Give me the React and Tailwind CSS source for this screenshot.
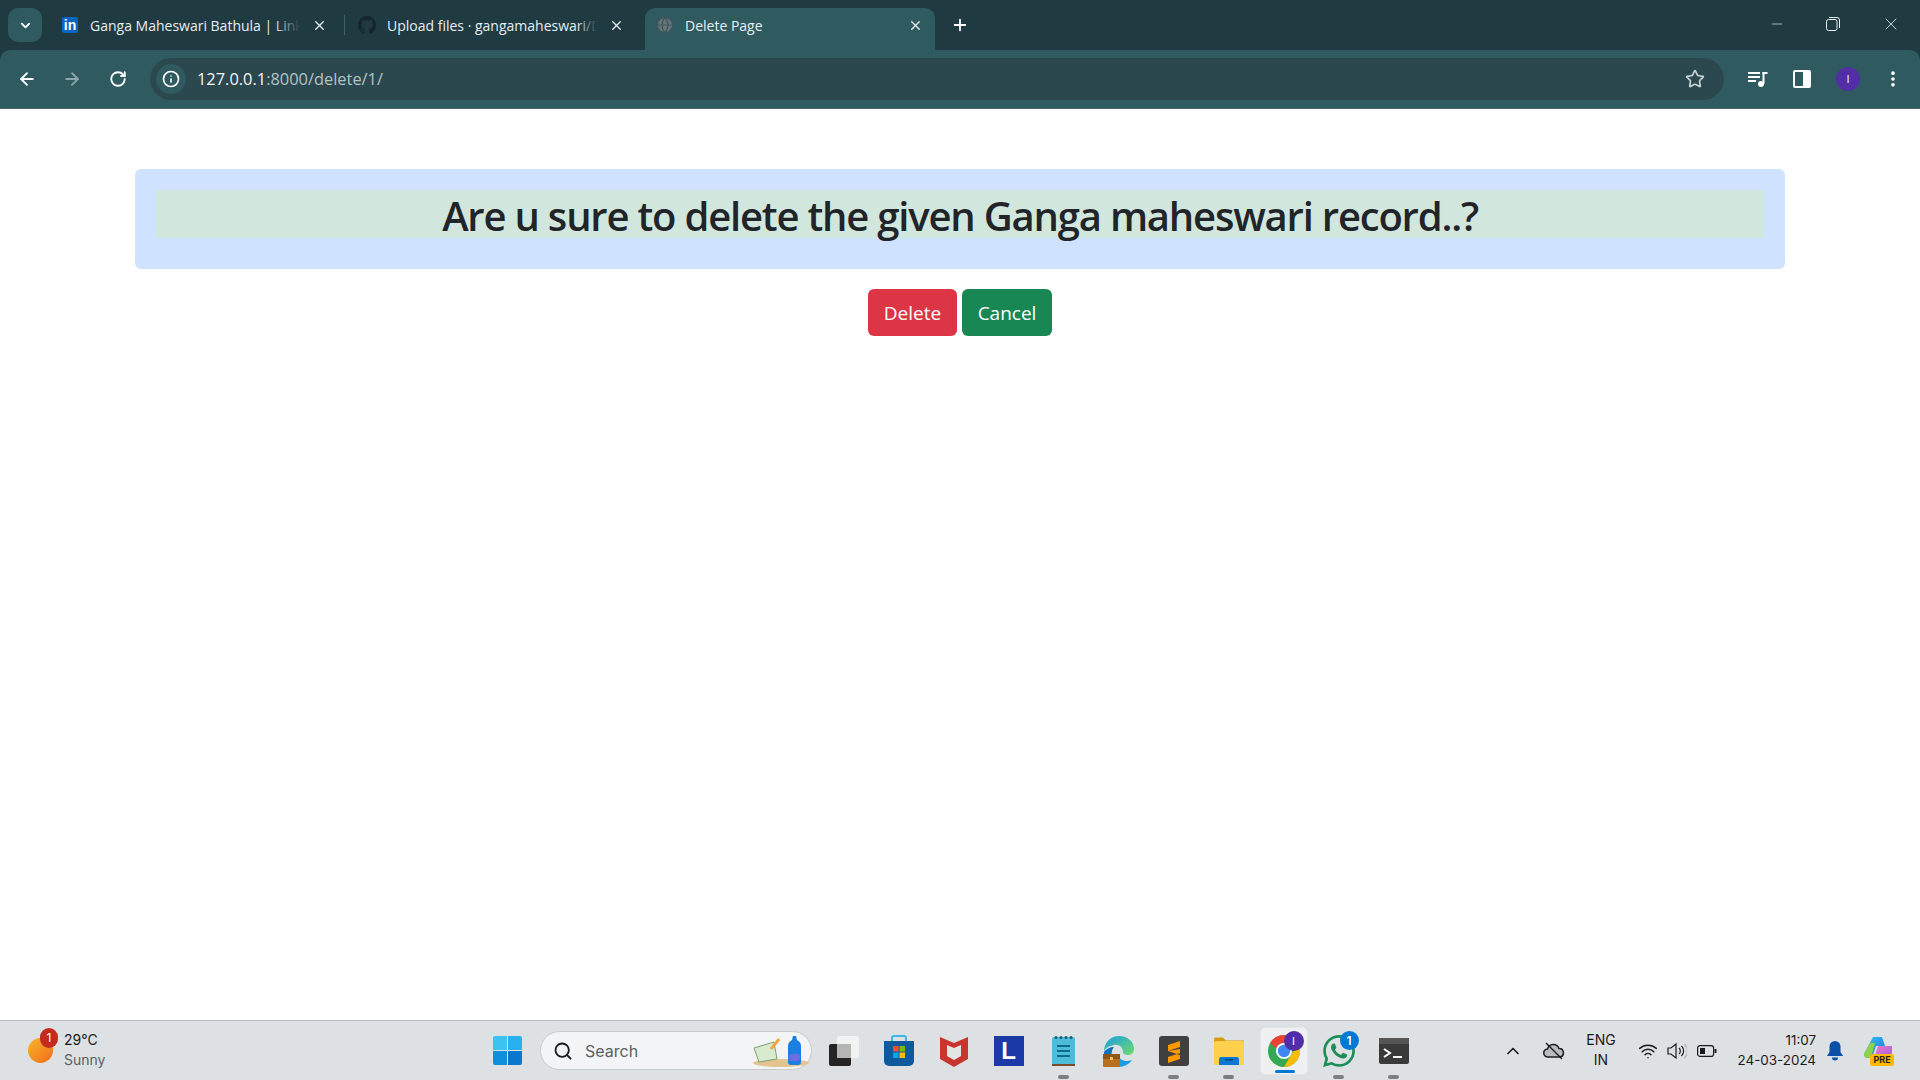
import React from 'react';
import { ArrowLeft, ArrowRight, RotateCw, Star, X, Plus, ChevronDown, ChevronUp, Info, Search, Minus, EllipsisVertical, Wifi, Globe } from 'lucide-react';

const LinkedinIcon = () => (
    <div className="w-[16px] h-[16px] bg-[#0a66c2] rounded-[2px] flex items-center justify-center text-white text-[14px] font-bold leading-none font-['Liberation_Sans',sans-serif]">in</div>
);

const GithubIcon = () => (
    <svg width="18" height="18" viewBox="0 0 16 16" fill="#15262b">
        <path d="M8 0C3.58 0 0 3.58 0 8c0 3.54 2.29 6.53 5.47 7.59.4.07.55-.17.55-.38 0-.19-.01-.82-.01-1.49-2.01.37-2.53-.49-2.69-.94-.09-.23-.48-.94-.82-1.13-.28-.15-.68-.52-.01-.53.63-.01 1.08.58 1.23.82.72 1.21 1.87.87 2.33.66.07-.52.28-.87.51-1.07-1.78-.2-3.64-.89-3.64-3.95 0-.87.31-1.59.82-2.15-.08-.2-.36-1.02.08-2.12 0 0 .67-.21 2.2.82.64-.18 1.32-.27 2-.27s1.36.09 2 .27c1.53-1.04 2.2-.82 2.2-.82.44 1.1.16 1.92.08 2.12.51.56.82 1.27.82 2.15 0 3.07-1.87 3.75-3.65 3.95.29.25.54.73.54 1.48 0 1.07-.01 1.93-.01 2.2 0 .21.15.46.55.38A8.01 8.01 0 0 0 16 8c0-4.42-3.58-8-8-8z" />
    </svg>
);

const TitleBar = () => (
    <div className="h-[50px] bg-[#1f3a41] flex items-end relative">
        <div className="w-[34px] h-[34px] ml-[8px] mb-[8px] rounded-[10px] bg-[#2f5a60] flex items-center justify-center">
            <ChevronDown size={15} strokeWidth={3} className="text-white" />
        </div>
        <div className="ml-[17px] flex items-center h-[42px] w-[285px] shrink-0 pb-[8px]">
            <div className="ml-[3px] mr-[12px]"><LinkedinIcon /></div>
            <div className="w-[210px] overflow-hidden whitespace-nowrap text-[14px] text-[#e6eef0] relative">
                Ganga Maheswari Bathula | LinkedIn
                <div className="absolute right-0 top-0 bottom-0 w-[26px] bg-gradient-to-r from-transparent to-[#1f3a41]" />
            </div>
            <X size={15} strokeWidth={2.2} className="text-[#e6eef0] ml-[12px] shrink-0" />
        </div>
        <div className="w-[1px] h-[20px] bg-[#3d6369] mb-[15px] shrink-0" />
        <div className="flex items-center h-[42px] w-[300px] shrink-0 pb-[8px] pl-[13px]">
            <GithubIcon />
            <div className="ml-[11px] w-[210px] overflow-hidden whitespace-nowrap text-[14px] text-[#e6eef0] relative">
                Upload files · gangamaheswari/Django
                <div className="absolute right-0 top-0 bottom-0 w-[20px] bg-gradient-to-r from-transparent to-[#1f3a41]" />
            </div>
            <X size={15} strokeWidth={2.2} className="text-[#e6eef0] ml-[12px] shrink-0" />
        </div>
        <div className="bg-[#2f5a60] rounded-t-[10px] flex items-center w-[290px] h-[42px] pl-[11px] pr-[12px] pb-[8px] shrink-0">
            <Globe size={18} fill="#66767b" strokeWidth={1.5} className="text-[#3f555a] shrink-0" />
            <div className="ml-[11px] flex-1 whitespace-nowrap text-[14px] text-[#e6eef0]">Delete Page</div>
            <X size={15} strokeWidth={2.2} className="text-[#e6eef0] shrink-0" />
        </div>
        <Plus size={18} strokeWidth={2.4} className="text-white ml-[16px] mb-[16px]" />
        <div className="ml-auto flex items-center self-start h-[48px] text-[#e6eef0]">
            <Minus size={16} strokeWidth={1} className="mr-[41px]" />
            <svg width="14" height="14" viewBox="0 0 14 14" fill="none" stroke="currentColor" className="mr-[41px]">
                <rect x="0.5" y="2.5" width="10.5" height="11" rx="2" />
                <path d="M3 .5h8a2.5 2.5 0 0 1 2.5 2.5v8" />
            </svg>
            <X size={20} strokeWidth={1} className="mr-[19px]" />
        </div>
    </div>
);

const MediaIcon = () => (
    <svg width="20" height="16" viewBox="0 0 20 16" fill="white">
        <rect x="0" y="1" width="12" height="2" />
        <rect x="0" y="5" width="12" height="2" />
        <rect x="0" y="9" width="8" height="2" />
        <circle cx="13" cy="13" r="3" />
        <rect x="14.5" y="1" width="2" height="12" />
        <rect x="14.5" y="1" width="5" height="2" />
    </svg>
);

const SidePanelIcon = () => (
    <svg width="18" height="18" viewBox="0 0 18 18">
        <rect x="0" y="0" width="18" height="18" rx="2" fill="white" />
        <rect x="2" y="2" width="8" height="14" fill="#2f5a60" />
    </svg>
);

const Toolbar = () => (
    <div className="bg-[#1f3a41]">
        <div className="h-[59px] bg-[#2f5a60] rounded-t-[10px] flex items-center border-b-[1px] border-[#47686d]">
            <ArrowLeft size={20} strokeWidth={2.2} className="text-white ml-[17px]" />
            <ArrowRight size={20} strokeWidth={2.2} className="text-[#8ea6a9] ml-[25px]" />
            <RotateCw size={18} strokeWidth={2.4} className="text-white ml-[27px]" />
            <div className="ml-[23px] w-[1574px] h-[42px] rounded-full bg-[#2c484f] flex items-center pl-[6px] pr-[19px]">
                <div className="w-[30px] h-[30px] rounded-full bg-[#2f5a60] flex items-center justify-center">
                    <Info size={18} strokeWidth={2.2} className="text-white" />
                </div>
                <div className="ml-[11px] text-[16.4px] text-[#f2f6f7]">
                    127.0.0.1<span className="text-[#b4c2c5]">:8000/delete/1/</span>
                </div>
                <Star size={20} strokeWidth={2} className="text-[#c7d0d2] ml-auto" />
            </div>
            <div className="ml-[24px]"><MediaIcon /></div>
            <div className="ml-[25px]"><SidePanelIcon /></div>
            <div className="ml-[25px] w-[24px] h-[24px] rounded-full bg-[#512da8] text-white text-[11px] flex items-center justify-center">I</div>
            <EllipsisVertical size={20} strokeWidth={2.4} className="text-white ml-[23px]" />
        </div>
    </div>
);

const WeatherIcon = () => (
    <div className="relative w-[30px] h-[46px]">
        <div className="absolute left-0 top-[10px] w-[25px] h-[25px] rounded-full bg-gradient-to-br from-[#f6b42c] to-[#f26a1b]" />
        <div className="absolute left-[12px] top-0 w-[18px] h-[20px] rounded-full bg-[#c42b1c] text-white text-[12px] leading-[20px] text-center">1</div>
    </div>
);

const WindowsLogo = () => (
    <div className="grid grid-cols-2 gap-[1px] w-[29px] h-[29px]">
        <div className="bg-[#3cc3f2] rounded-tl-[2px]" />
        <div className="bg-[#27b1ef] rounded-tr-[2px]" />
        <div className="bg-[#0f8fdc] rounded-bl-[2px]" />
        <div className="bg-[#0a78d1] rounded-br-[2px]" />
    </div>
);

const TaskView = () => (
    <svg width="30" height="30" viewBox="0 0 30 30">
        <rect x="0" y="8" width="22" height="22" rx="2" fill="#242424" />
        <rect x="8" y="0" width="22" height="22" rx="2" fill="#f4f4f4" fillOpacity="0.85" />
        <rect x="8" y="8" width="14" height="14" fill="#b5b5b5" />
    </svg>
);

const StoreIcon = () => (
    <svg width="30" height="32" viewBox="0 0 30 32">
        <path d="M8 6V3a2 2 0 0 1 2-2h10a2 2 0 0 1 2 2v3" fill="none" stroke="#3bb5e8" strokeWidth="2" />
        <path d="M0 6h30v20a5 5 0 0 1-5 5H5a5 5 0 0 1-5-5z" fill="#0f5a9c" />
        <rect x="9" y="11" width="5.5" height="5.5" fill="#f25022" />
        <rect x="15.5" y="11" width="5.5" height="5.5" fill="#7fba00" />
        <rect x="9" y="17.5" width="5.5" height="5.5" fill="#00a4ef" />
        <rect x="15.5" y="17.5" width="5.5" height="5.5" fill="#ffb900" />
    </svg>
);

const McafeeIcon = () => (
    <svg width="28" height="32" viewBox="0 0 28 32">
        <path d="M0 2l14 6 14-6v22l-14 8-14-8z" fill="#c8352f" />
        <path d="M7 10l7 3 7-3v11l-7 4-7-4z" fill="#e4e6e6" />
    </svg>
);

const LIcon = () => (
    <div className="w-[30px] h-[30px] bg-[#1c39a8] flex items-center justify-center text-white font-bold text-[24px] leading-none font-['Liberation_Sans',sans-serif]">L</div>
);

const NotepadIcon = () => (
    <svg width="23" height="32" viewBox="0 0 23 32">
        <rect x="0" y="2" width="23" height="28" rx="2" fill="#4dbcd8" />
        <rect x="0" y="29" width="23" height="2" fill="#7a4a2a" />
        <rect x="5" y="10" width="13" height="2" fill="#0e6a8e" />
        <rect x="5" y="15" width="13" height="2" fill="#0e6a8e" />
        <rect x="5" y="20" width="13" height="2" fill="#0e6a8e" />
        {[3, 8, 13, 18].map((x) => (
            <circle key={x} cx={x + 1} cy="2.5" r="1.5" fill="#155e7c" />
        ))}
    </svg>
);

const EdgeIcon = () => (
    <svg width="32" height="32" viewBox="0 0 32 32">
        <path d="M1 17C1 7 8 1 16 1c9 0 15 6 15 13 0 4-3 6-6 6-3 0-5-1-5-3 0-5-4-8-9-7-5 1-9 3-10 7z" fill="url(#edgeGrad)" />
        <path d="M12 31c-6-2-11-7-11-14 2-3 6-5 10-5-3 3-4 12 1 19z" fill="#0c6fc0" />
        <path d="M12 31c6 2 13 0 17-6-5 2-11 1-13-3-2 3-2 6-4 9z" fill="#1b9de2" />
        <rect x="0" y="19" width="17" height="13" rx="1" fill="#b8701e" />
        <rect x="0" y="19" width="17" height="5" fill="#8f5717" />
        <rect x="7" y="22" width="3" height="3" fill="#f2c14e" />
        <defs>
            <linearGradient id="edgeGrad" x1="0" y1="0" x2="1" y2="1">
                <stop offset="0" stopColor="#1b9de2" />
                <stop offset="1" stopColor="#6fdc6a" />
            </linearGradient>
        </defs>
    </svg>
);

const SublimeIcon = () => (
    <svg width="30" height="30" viewBox="0 0 30 30">
        <rect width="30" height="30" rx="3" fill="#404040" />
        <path d="M21 5v6L9 15v-6zM9 15l12 4v-6zM21 17v6L9 27v-6z" fill="#ff9800" />
    </svg>
);

const FolderIcon = () => (
    <svg width="30" height="30" viewBox="0 0 30 30">
        <path d="M0 3a1.5 1.5 0 0 1 1.5-1.5H9l3 3h18v3H0z" fill="#d89c10" />
        <rect x="0" y="5" width="30" height="24" rx="1.5" fill="#ffd04c" />
        <path d="M5 29v-6a2 2 0 0 1 2-2h16a2 2 0 0 1 2 2v6z" fill="#0a78d1" />
        <rect x="11" y="23" width="8" height="1.5" fill="#07457f" />
    </svg>
);

const ChromeIcon = () => (
    <div className="relative w-[48px] h-[48px] bg-[#eef0f1] rounded-[5px] flex items-center justify-center border border-[#e3e5e6]">
        <svg width="32" height="32" viewBox="0 0 32 32">
            <circle cx="16" cy="16" r="16" fill="#34a853" />
            <path d="M16 0a16 16 0 0 1 13.9 8H16a8 8 0 0 0-7.7 5.8L2.2 8A16 16 0 0 1 16 0z" fill="#ea4335" />
            <path d="M29.9 8A16 16 0 0 1 16 32l6.9-12A8 8 0 0 0 22.9 8z" fill="#fbbc04" />
            <circle cx="16" cy="16" r="8" fill="white" />
            <circle cx="16" cy="16" r="6.2" fill="#4285f4" />
        </svg>
        <div className="absolute top-[3px] right-[3px] w-[20px] h-[20px] rounded-full bg-[#512da8] text-white text-[11px] leading-[20px] text-center">I</div>
        <div className="absolute bottom-[1px] left-[14px] w-[20px] h-[3px] rounded-full bg-[#0078d4]" />
    </div>
);

const WhatsappIcon = () => (
    <div className="relative w-[32px] h-[32px]">
        <svg width="32" height="32" viewBox="0 0 24 24" fill="#1b8f57">
            <path d="M17.47 14.38c-.3-.15-1.76-.87-2.03-.97-.27-.1-.47-.15-.67.15-.2.3-.77.97-.94 1.16-.17.2-.35.22-.64.08-.3-.15-1.26-.46-2.39-1.48-.88-.79-1.48-1.76-1.65-2.06-.17-.3-.02-.46.13-.6.13-.13.3-.35.45-.52.15-.17.2-.3.3-.5.1-.2.05-.37-.03-.52-.07-.15-.67-1.61-.91-2.2-.24-.58-.49-.5-.67-.51h-.57c-.2 0-.52.07-.79.37-.27.3-1.04 1.02-1.04 2.48s1.07 2.88 1.21 3.07c.15.2 2.1 3.2 5.08 4.49.71.3 1.26.49 1.69.62.71.23 1.36.2 1.87.12.57-.08 1.76-.72 2.01-1.41.25-.7.25-1.29.17-1.41-.07-.13-.27-.2-.57-.35zM12.05 21.8h-.01a9.87 9.87 0 0 1-5.03-1.38l-.36-.21-3.74.98 1-3.65-.24-.37A9.86 9.86 0 0 1 2.17 12C2.17 6.55 6.6 2.12 12.06 2.12c2.64 0 5.12 1.03 6.99 2.9a9.82 9.82 0 0 1 2.89 6.99c0 5.45-4.44 9.89-9.89 9.89zM20.46 3.49A11.82 11.82 0 0 0 12.05 0C5.5 0 .16 5.34.16 11.89c0 2.1.55 4.14 1.59 5.95L.06 24l6.3-1.65a11.88 11.88 0 0 0 5.68 1.45h.01c6.55 0 11.89-5.34 11.89-11.89 0-3.18-1.24-6.16-3.48-8.41z" />
        </svg>
        <div className="absolute -top-[4px] -right-[4px] w-[19px] h-[19px] rounded-full bg-[#0078d4] text-white text-[12px] leading-[19px] text-center font-semibold">1</div>
    </div>
);

const TerminalIcon = () => (
    <svg width="30" height="26" viewBox="0 0 30 26">
        <rect width="30" height="26" rx="2" fill="#3a3a3a" />
        <rect width="30" height="6" fill="#555" />
        <path d="M5 11l6 4-6 4" fill="none" stroke="white" strokeWidth="2" />
        <rect x="14" y="18" width="9" height="2" fill="white" />
    </svg>
);

const CloudOff = () => (
    <svg width="22" height="18" viewBox="0 0 22 18" fill="none" stroke="#1c1c1c" strokeWidth="1.5">
        <path d="M5 15a4 4 0 0 1-.5-8A6 6 0 0 1 16 6.500a4.300 4.300 0 0 1 1 8.500z" fill="#b9bcbe" />
        <path d="M3 1l16 16" />
    </svg>
);

const Speaker = () => (
    <svg width="20" height="18" viewBox="0 0 20 18" fill="none" stroke="#1c1c1c" strokeWidth="1.2">
        <path d="M1 6h3l5-4v14l-5-4H1z" />
        <path d="M12 6a4 4 0 0 1 0 6" />
        <path d="M14.500 4a7 7 0 0 1 0 10" />
        <path d="M17.500 2a10 10 0 0 1 0 14" stroke="#b0b0b0" />
    </svg>
);

const Battery = () => (
    <svg width="20" height="12" viewBox="0 0 20 12">
        <rect x="0.6" y="0.6" width="16" height="10.800" rx="2.500" fill="none" stroke="#1c1c1c" strokeWidth="1.2" />
        <rect x="3" y="3" width="5" height="6" fill="#1c1c1c" />
        <rect x="17.500" y="4" width="2" height="4" fill="#1c1c1c" />
    </svg>
);

const Bell = () => (
    <svg width="16" height="20" viewBox="0 0 16 20" fill="#0a4fa8">
        <path d="M8 0a5.500 5.500 0 0 1 5.500 5.500V11l2.500 4H0l2.500-4V5.500A5.500 5.500 0 0 1 8 0z" />
        <path d="M5 16.500h6a3 3 0 0 1-6 0z" />
    </svg>
);

const CopilotIcon = () => (
    <div className="relative w-[30px] h-[30px]">
        <svg width="28" height="24" viewBox="0 0 28 24" className="absolute left-[0px] top-0">
            <defs>
                <linearGradient id="copA" x1="0" y1="0" x2="1" y2="1">
                    <stop offset="0" stopColor="#37c6f0" />
                    <stop offset="1" stopColor="#1d6fe0" />
                </linearGradient>
                <linearGradient id="copB" x1="0" y1="0" x2="1" y2="1">
                    <stop offset="0" stopColor="#f27ab8" />
                    <stop offset="1" stopColor="#9a5cf0" />
                </linearGradient>
            </defs>
            <path d="M9 1h9l3 9H12l-4 12H4Q0 22 0 18z" fill="url(#copA)" />
            <path d="M14 10h14v6q0 6-6 6H10z" fill="url(#copB)" />
            <path d="M0 18L6 7h5l-4 15H4Q0 22 0 18z" fill="#8fd14f" />
        </svg>
        <div className="absolute left-[6px] bottom-0 w-[24px] h-[12px] rounded-[2px] bg-[#ffb900] text-[9px] leading-[12px] font-bold text-center text-[#222]">PRE</div>
    </div>
);

const Dot = ({ on }) => (
    <div className={on ? 'w-[11px] h-[4px] rounded-full bg-[#7b7f82]' : 'w-[11px] h-[4px]'} />
);

const dockIcons = [
    { icon: <TaskView /> },
    { icon: <StoreIcon /> },
    { icon: <McafeeIcon /> },
    { icon: <LIcon /> },
    { icon: <NotepadIcon />, open: true },
    { icon: <EdgeIcon /> },
    { icon: <SublimeIcon />, open: true },
    { icon: <FolderIcon />, open: true },
    { icon: <ChromeIcon /> },
    { icon: <WhatsappIcon />, open: true },
    { icon: <TerminalIcon />, open: true },
];

const Taskbar = () => (
    <div className="h-[60px] bg-[#dde1e3] border-t border-[#b9bcbd] flex items-center font-['Inter',sans-serif] relative">
        <div className="ml-[28px] w-[30px]"><WeatherIcon /></div>
        <div className="ml-[6px] w-[100px] text-[14px] leading-[20px] pb-[2px]">
            <div className="text-[#1a1a1a]">29°C</div>
            <div className="text-[#5c5f61]">Sunny</div>
        </div>
        <div className="ml-[329px]"><WindowsLogo /></div>
        <div className="ml-[18px] w-[272px] h-[39px] rounded-full bg-[#f3f4f5] border border-[#c8cbcc] flex items-center relative">
            <Search size={20} strokeWidth={2.2} className="text-[#1a1a1a] ml-[12px]" />
            <span className="ml-[12px] text-[16px] text-[#5c5f61]">Search</span>
            <svg width="58" height="36" viewBox="0 0 58 36" className="absolute right-[1px] top-0">
                <ellipse cx="29" cy="31" rx="28" ry="4" fill="#e2c48e" />
                <path d="M2 16l20-6 3 17-18 3z" fill="#d9ead0" stroke="#7aa36c" />
                <path d="M18 16l8-10 2 2-8 10z" fill="#f2a33a" />
                <path d="M36 14q0-4 4-6l1-4h3l1 4q4 2 4 6v16q0 3-3 3h-7q-3 0-3-3z" fill="#1a7fe0" />
                <rect x="37" y="22" width="11" height="7" rx="2" fill="#6a6ee0" />
            </svg>
        </div>
        <div className="ml-[4px] flex">
            {dockIcons.map((d, i) => (
                <div key={i} className="w-[55px] h-[48px] flex flex-col items-center justify-center relative">
                    {d.icon}
                    <div className="absolute bottom-[-4px]"><Dot on={d.open} /></div>
                </div>
            ))}
        </div>
        <ChevronUp size={20} strokeWidth={2} className="text-[#1c1c1c] ml-[82px]" />
        <div className="ml-[20px]"><CloudOff /></div>
        <div className="ml-[12px] w-[48px] text-center text-[14px] leading-[20px] text-[#1a1a1a] pb-[2px]">
            <div>ENG</div>
            <div>IN</div>
        </div>
        <Wifi size={20} strokeWidth={1.8} className="text-[#1c1c1c] ml-[13px]" />
        <div className="ml-[9px]"><Speaker /></div>
        <div className="ml-[10px]"><Battery /></div>
        <div className="w-[99px] text-right text-[13.4px] leading-[20px] text-[#1a1a1a] pb-[2px]">
            <div>11:07</div>
            <div>24-03-2024</div>
        </div>
        <div className="ml-[11px]"><Bell /></div>
        <div className="ml-[21px]"><CopilotIcon /></div>
    </div>
);

export default function App() {
    return (
        <div className="w-[1920px] h-[1080px] flex flex-col overflow-hidden bg-white font-['Open_Sans',sans-serif]">
            <TitleBar />
            <Toolbar />
            <main className="flex-1 px-[135px] pt-[60px]">
                <div className="h-[100px] bg-[#cfe2ff] rounded-[6px] pt-[21px] px-[21px]">
                    <h1 className="h-[48px] bg-[#d1e7dd] text-center text-[40px] leading-[52px] font-semibold text-[#212529] tracking-[-1.2px] whitespace-nowrap">
                        Are u sure to delete the given Ganga maheswari record..?
                    </h1>
                </div>
                <div className="flex justify-center gap-[5px] mt-[20px]">
                    <button className="w-[89px] h-[47px] pt-[2px] rounded-[6px] bg-[#dc3545] text-white text-[19px]">Delete</button>
                    <button className="w-[90px] h-[47px] pt-[2px] rounded-[6px] bg-[#198754] text-white text-[19px]">Cancel</button>
                </div>
            </main>
            <Taskbar />
        </div>
    );
}
